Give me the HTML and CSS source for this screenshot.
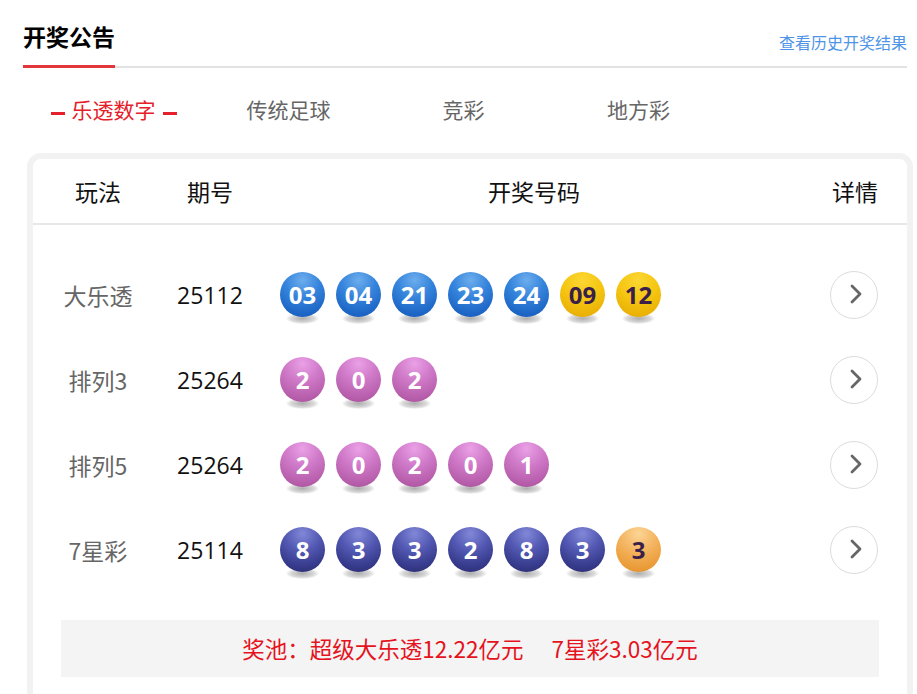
FILE: index.html
```html
<!DOCTYPE html>
<html lang="zh-CN">
<head>
<meta charset="utf-8">
<title>开奖公告</title>
<link rel="stylesheet" href="styles.css">
</head>
<body>
<div class="page">
  <div class="top">
    <h2 class="title">开奖公告</h2>
    <a class="more" href="#">查看历史开奖结果</a>
  </div>
  <div class="tabs">
    <div class="tab active"><span class="dash"></span>乐透数字<span class="dash"></span></div>
    <div class="tab">传统足球</div>
    <div class="tab">竞彩</div>
    <div class="tab">地方彩</div>
  </div>
  <div class="card">
    <div class="grid head">
      <div class="c1">玩法</div>
      <div class="c2">期号</div>
      <div class="c3">开奖号码</div>
      <div class="c4">详情</div>
    </div>
    <div class="rows">
      <div class="grid row">
        <div class="c1 name">大乐透</div>
        <div class="c2">25112</div>
        <div class="c3 balls">
          <span class="ball blue">03</span><span class="ball blue">04</span><span class="ball blue">21</span><span class="ball blue">23</span><span class="ball blue">24</span><span class="ball yellow">09</span><span class="ball yellow">12</span>
        </div>
        <div class="c4"><a class="go" href="#"><svg width="48" height="48" viewBox="0 0 48 48"><polyline points="22,16 30,24 22,32" fill="none" stroke="#666" stroke-width="2.8" stroke-linecap="round" stroke-linejoin="round"/></svg></a></div>
      </div>
      <div class="grid row">
        <div class="c1 name">排列3</div>
        <div class="c2">25264</div>
        <div class="c3 balls">
          <span class="ball pink">2</span><span class="ball pink">0</span><span class="ball pink">2</span>
        </div>
        <div class="c4"><a class="go" href="#"><svg width="48" height="48" viewBox="0 0 48 48"><polyline points="22,16 30,24 22,32" fill="none" stroke="#666" stroke-width="2.8" stroke-linecap="round" stroke-linejoin="round"/></svg></a></div>
      </div>
      <div class="grid row">
        <div class="c1 name">排列5</div>
        <div class="c2">25264</div>
        <div class="c3 balls">
          <span class="ball pink">2</span><span class="ball pink">0</span><span class="ball pink">2</span><span class="ball pink">0</span><span class="ball pink">1</span>
        </div>
        <div class="c4"><a class="go" href="#"><svg width="48" height="48" viewBox="0 0 48 48"><polyline points="22,16 30,24 22,32" fill="none" stroke="#666" stroke-width="2.8" stroke-linecap="round" stroke-linejoin="round"/></svg></a></div>
      </div>
      <div class="grid row">
        <div class="c1 name">7星彩</div>
        <div class="c2">25114</div>
        <div class="c3 balls">
          <span class="ball navy">8</span><span class="ball navy">3</span><span class="ball navy">3</span><span class="ball navy">2</span><span class="ball navy">8</span><span class="ball navy">3</span><span class="ball orange">3</span>
        </div>
        <div class="c4"><a class="go" href="#"><svg width="48" height="48" viewBox="0 0 48 48"><polyline points="22,16 30,24 22,32" fill="none" stroke="#666" stroke-width="2.8" stroke-linecap="round" stroke-linejoin="round"/></svg></a></div>
      </div>
    </div>
    <div class="pool">奖池：超级大乐透12.22亿元<span class="sp"></span>7星彩3.03亿元</div>
  </div>
</div>
</body>
</html>
```
FILE: styles.css
```css
* { box-sizing: border-box; }
html, body { margin: 0; padding: 0; background: #fff; overflow: hidden; }
body {
  font-family: "Noto Sans CJK SC", "Noto Sans", sans-serif;
  color: #111;
}
.page { padding: 0 10px 0 23px; }

.top {
  display: flex;
  justify-content: space-between;
  align-items: flex-end;
  border-bottom: 2px solid #e2e2e2;
}
.title {
  margin: 0 0 -2px 0;
  font-size: 23px;
  font-weight: 700;
  line-height: 32px;
  padding: 20px 0 13px;
  border-bottom: 3px solid #e2363c;
  color: #000;
}
.more {
  font-size: 16px;
  line-height: 20px;
  color: #4d94e6;
  text-decoration: none;
  margin-bottom: 14px;
}

.tabs {
  display: flex;
  margin: 21px 0 0 3px;
}
.tab {
  width: 175px;
  height: 40px;
  line-height: 40px;
  text-align: center;
  font-size: 21px;
  color: #666;
}
.tab.active { color: #e5202a; }
.dash {
  display: inline-block;
  width: 14px;
  height: 3px;
  background: #e5202a;
  vertical-align: middle;
  margin: 0 7px;
  position: relative;
  top: 1px;
}

.card {
  margin: 24px -6px 0 4px;
  border: 6px solid #f2f2f2;
  border-radius: 14px;
  padding-bottom: 40px;
  background: #fff;
}
.grid {
  display: grid;
  grid-template-columns: 130px 94px 1fr 104px;
  align-items: center;
}
.head {
  height: 66px;
  border-bottom: 2px solid #e8e8e8;
  font-size: 23px;
  color: #111;
}
.head > div { text-align: center; }
.head .c3 { padding-left: 8px; }

.rows { padding-top: 27px; }
.row {
  height: 85px;
  font-size: 23px;
}
.row .c1, .row .c2, .row .c4 { text-align: center; }
.row .c2 { font-family: "Open Sans", "Noto Sans", sans-serif; color: #111; font-size: 23px; }
.name { color: #666; }

.balls {
  display: flex;
  gap: 11px;
  padding-left: 23px;
  isolation: isolate;
}
.ball {
  position: relative;
  width: 45px;
  height: 45px;
  border-radius: 50%;
  font-family: "Open Sans", "Noto Sans", sans-serif;
  font-weight: 700;
  font-size: 24px;
  line-height: 45px;
  text-align: center;
  color: #fff;
}
.ball::after {
  content: "";
  position: absolute;
  left: 6px;
  right: 6px;
  bottom: -7px;
  height: 11px;
  border-radius: 50%;
  background: radial-gradient(ellipse at center, rgba(0,0,0,0.32) 0%, rgba(0,0,0,0.15) 50%, rgba(0,0,0,0) 72%);
  z-index: -1;
}
.blue { background: radial-gradient(circle at 50% 18%, #6daded 0%, #3584dc 40%, #1c64c4 80%, #1a5bb8 100%); }
.yellow { background: radial-gradient(circle at 50% 18%, #fbd633 0%, #f5c612 45%, #eab206 80%, #e0a300 100%); color: #3a1f4a; }
.pink { background: radial-gradient(circle at 50% 15%, #eaa0e6 0%, #cf79c8 40%, #b55ca9 80%, #a64f9a 100%); }
.navy { background: radial-gradient(circle at 50% 15%, #8288d8 0%, #5257b2 40%, #363a8a 75%, #272a68 100%); }
.orange { background: radial-gradient(circle at 50% 15%, #fbd596 0%, #f3b15a 45%, #e99a36 80%, #dc8a22 100%); color: #3a1f4a; }

.go {
  display: inline-block;
  width: 48px;
  height: 48px;
  border-radius: 50%;
  border: 1.5px solid #dcdcdc;
  vertical-align: middle;
  position: relative;
  left: -1px;
}
.go svg { display: block; margin: -1.5px; }

.pool {
  margin: 28px 28px 0;
  height: 57px;
  line-height: 57px;
  background: #f4f4f4;
  text-align: center;
  color: #e5131d;
  font-size: 22.5px;
}
.sp { display: inline-block; width: 28px; }
```
